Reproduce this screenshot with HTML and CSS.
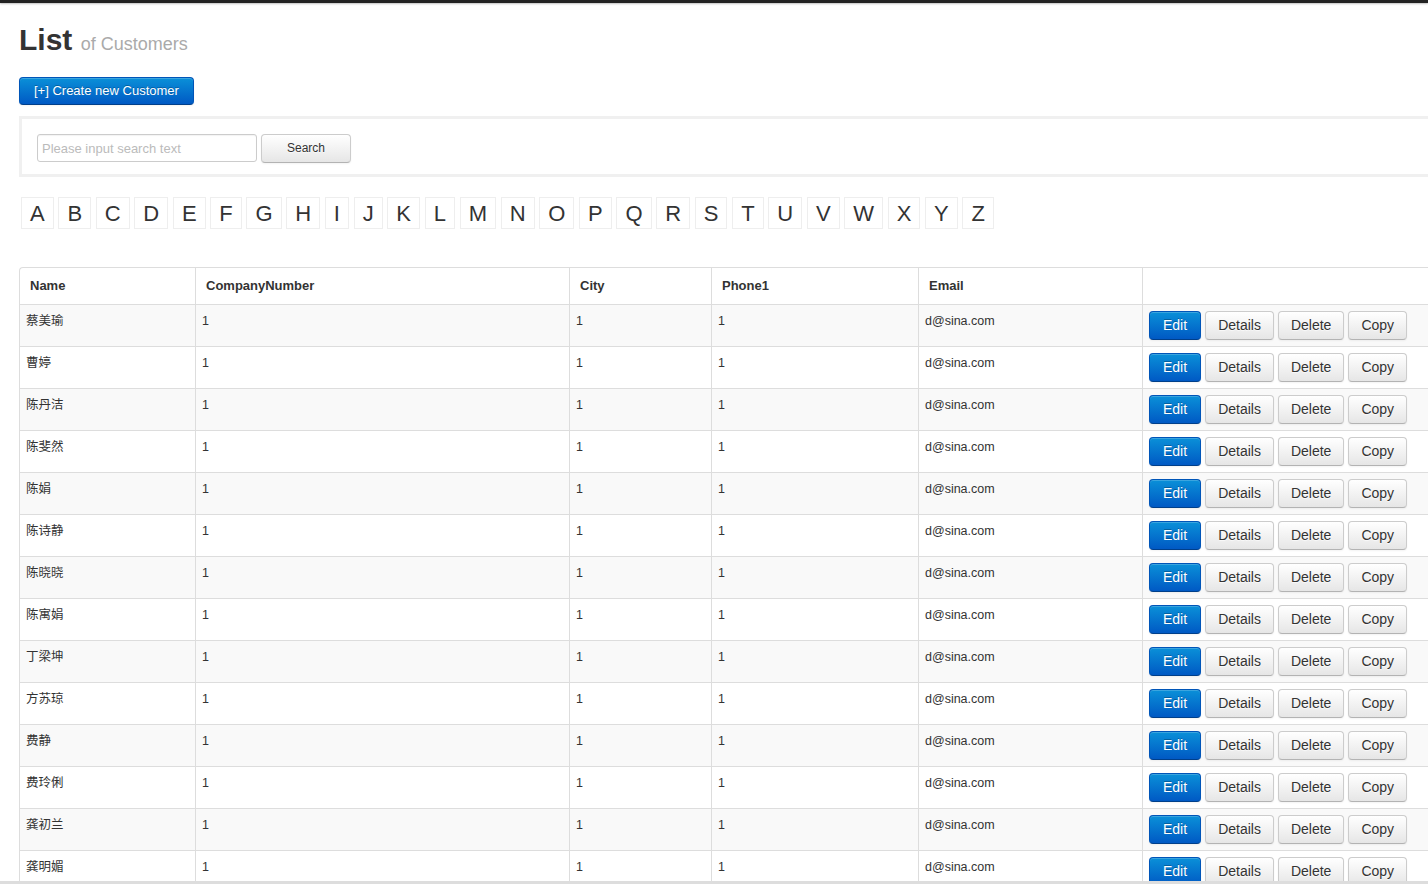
FILE: index.html
```html
<!DOCTYPE html>
<html lang="zh">
<head>
<meta charset="utf-8">
<title>List of Customers</title>
<link rel="stylesheet" href="styles.css">
</head>
<body>
<div class="topbar"></div>
<div class="page">
  <h1 class="title">List <small>of Customers</small></h1>
  <a class="btn btn-primary create">[+] Create new Customer</a>
  <div class="well">
    <form class="search">
      <input class="search-input" type="text" placeholder="Please input search text">
      <button class="btn btn-search" type="button">Search</button>
    </form>
  </div>
  <div class="letters">
    <a class="letter">A</a><a class="letter">B</a><a class="letter">C</a><a class="letter">D</a><a class="letter">E</a><a class="letter">F</a><a class="letter">G</a><a class="letter">H</a><a class="letter">I</a><a class="letter">J</a><a class="letter">K</a><a class="letter">L</a><a class="letter">M</a><a class="letter">N</a><a class="letter">O</a><a class="letter">P</a><a class="letter">Q</a><a class="letter">R</a><a class="letter">S</a><a class="letter">T</a><a class="letter">U</a><a class="letter">V</a><a class="letter">W</a><a class="letter">X</a><a class="letter">Y</a><a class="letter">Z</a>
  </div>
  <table class="grid">
    <colgroup>
      <col class="c-name"><col class="c-company"><col class="c-city"><col class="c-phone"><col class="c-email"><col class="c-actions">
    </colgroup>
    <thead>
      <tr><th>Name</th><th>CompanyNumber</th><th>City</th><th>Phone1</th><th>Email</th><th></th></tr>
    </thead>
    <tbody>
      <tr><td>蔡美瑜</td><td>1</td><td>1</td><td>1</td><td>d@sina.com</td><td class="actions"><a class="btn btn-primary">Edit</a><a class="btn">Details</a><a class="btn">Delete</a><a class="btn">Copy</a></td></tr>
      <tr><td>曹婷</td><td>1</td><td>1</td><td>1</td><td>d@sina.com</td><td class="actions"><a class="btn btn-primary">Edit</a><a class="btn">Details</a><a class="btn">Delete</a><a class="btn">Copy</a></td></tr>
      <tr><td>陈丹洁</td><td>1</td><td>1</td><td>1</td><td>d@sina.com</td><td class="actions"><a class="btn btn-primary">Edit</a><a class="btn">Details</a><a class="btn">Delete</a><a class="btn">Copy</a></td></tr>
      <tr><td>陈斐然</td><td>1</td><td>1</td><td>1</td><td>d@sina.com</td><td class="actions"><a class="btn btn-primary">Edit</a><a class="btn">Details</a><a class="btn">Delete</a><a class="btn">Copy</a></td></tr>
      <tr><td>陈娟</td><td>1</td><td>1</td><td>1</td><td>d@sina.com</td><td class="actions"><a class="btn btn-primary">Edit</a><a class="btn">Details</a><a class="btn">Delete</a><a class="btn">Copy</a></td></tr>
      <tr><td>陈诗静</td><td>1</td><td>1</td><td>1</td><td>d@sina.com</td><td class="actions"><a class="btn btn-primary">Edit</a><a class="btn">Details</a><a class="btn">Delete</a><a class="btn">Copy</a></td></tr>
      <tr><td>陈晓晓</td><td>1</td><td>1</td><td>1</td><td>d@sina.com</td><td class="actions"><a class="btn btn-primary">Edit</a><a class="btn">Details</a><a class="btn">Delete</a><a class="btn">Copy</a></td></tr>
      <tr><td>陈寓娟</td><td>1</td><td>1</td><td>1</td><td>d@sina.com</td><td class="actions"><a class="btn btn-primary">Edit</a><a class="btn">Details</a><a class="btn">Delete</a><a class="btn">Copy</a></td></tr>
      <tr><td>丁梁坤</td><td>1</td><td>1</td><td>1</td><td>d@sina.com</td><td class="actions"><a class="btn btn-primary">Edit</a><a class="btn">Details</a><a class="btn">Delete</a><a class="btn">Copy</a></td></tr>
      <tr><td>方苏琼</td><td>1</td><td>1</td><td>1</td><td>d@sina.com</td><td class="actions"><a class="btn btn-primary">Edit</a><a class="btn">Details</a><a class="btn">Delete</a><a class="btn">Copy</a></td></tr>
      <tr><td>费静</td><td>1</td><td>1</td><td>1</td><td>d@sina.com</td><td class="actions"><a class="btn btn-primary">Edit</a><a class="btn">Details</a><a class="btn">Delete</a><a class="btn">Copy</a></td></tr>
      <tr><td>费玲俐</td><td>1</td><td>1</td><td>1</td><td>d@sina.com</td><td class="actions"><a class="btn btn-primary">Edit</a><a class="btn">Details</a><a class="btn">Delete</a><a class="btn">Copy</a></td></tr>
      <tr><td>龚初兰</td><td>1</td><td>1</td><td>1</td><td>d@sina.com</td><td class="actions"><a class="btn btn-primary">Edit</a><a class="btn">Details</a><a class="btn">Delete</a><a class="btn">Copy</a></td></tr>
      <tr><td>龚明媚</td><td>1</td><td>1</td><td>1</td><td>d@sina.com</td><td class="actions"><a class="btn btn-primary">Edit</a><a class="btn">Details</a><a class="btn">Delete</a><a class="btn">Copy</a></td></tr>
    </tbody>
  </table>
</div>
<div class="bottombar"></div>
</body>
</html>
```

FILE: styles.css
```css
html, body {
  margin: 0;
  padding: 0;
  overflow: hidden;
  background: #fff;
}
body {
  font-family: "Liberation Sans", Arial, "Noto Sans CJK SC", sans-serif;
  color: #333;
  font-size: 13px;
  line-height: 18px;
}
.topbar {
  height: 3px;
  background: #222;
  box-shadow: 0 1px 2px rgba(0,0,0,0.25);
}
.page {
  width: 1480px;
  padding: 0 0 0 19px;
}
.title {
  margin: 17px 0 0 0;
  font-size: 30px;
  line-height: 40px;
  font-weight: bold;
  color: #333;
}
.title small {
  font-size: 18px;
  font-weight: normal;
  color: #aaa;
}
.btn {
  display: inline-block;
  box-sizing: border-box;
  height: 29px;
  padding: 4px 12px;
  font-size: 14px;
  line-height: 19px;
  color: #333;
  text-align: center;
  text-shadow: 0 1px 1px rgba(255,255,255,0.75);
  background: linear-gradient(to bottom, #ffffff, #e6e6e6);
  border: 1px solid #cccccc;
  border-bottom-color: #b3b3b3;
  border-radius: 4px;
  box-shadow: inset 0 1px 0 rgba(255,255,255,0.2), 0 1px 2px rgba(0,0,0,0.05);
  font-family: "Liberation Sans", Arial, sans-serif;
  cursor: pointer;
}
.btn-primary {
  color: #fff;
  text-shadow: 0 -1px 0 rgba(0,0,0,0.25);
  background: linear-gradient(to bottom, #0a90d8, #0059c4);
  border-color: #0055b8 #0055b8 #003f8a;
}
.create {
  margin-top: 13px;
  height: 28px;
  padding: 4px 14px;
  font-size: 13px;
  line-height: 18px;
}
.well {
  margin-top: 11px;
  border: 3px solid #f0f0f0;
  padding: 15px 15px 11px 15px;
}
.search {
  display: flex;
  align-items: flex-start;
  gap: 4px;
  margin: 0;
}
.search-input {
  box-sizing: border-box;
  width: 220px;
  height: 28px;
  margin: 0;
  padding: 4px 4px;
  border: 1px solid #cccccc;
  border-radius: 3px;
  font-family: "Liberation Sans", Arial, sans-serif;
  font-size: 13px;
  color: #555;
  box-shadow: inset 0 1px 1px rgba(0,0,0,0.05);
}
.search-input::placeholder {
  color: #bbb;
}
.btn-search {
  width: 90px;
  height: 29px;
  font-size: 12px;
  margin: 0;
}
.letters {
  display: flex;
  gap: 4.7px;
  margin: 20px 0 0 2px;
}
.letter {
  display: block;
  height: 30px;
  padding: 0 8px;
  border: 1px solid #eeeeee;
  font-size: 22px;
  line-height: 31px;
  color: #333;
}
.grid {
  margin-top: 38px;
  width: 1460px;
  table-layout: fixed;
  border-collapse: separate;
  border-spacing: 0;
  border: 1px solid #dddddd;
  border-right: 0;
  border-radius: 4px 0 0 0;
}
.c-name { width: 175px; }
.c-company { width: 374px; }
.c-city { width: 142px; }
.c-phone { width: 207px; }
.c-email { width: 224px; }
.grid th {
  text-align: left;
  font-size: 13px;
  font-weight: bold;
  line-height: 16px;
  padding: 10px 10px;
  color: #333;
}
.grid th + th, .grid td + td {
  border-left: 1px solid #dddddd;
}
.grid td {
  border-top: 1px solid #dddddd;
  height: 27px;
  padding: 8px 6px 6px 6px;
  vertical-align: top;
  font-size: 12.5px;
  line-height: 17px;
  color: #333;
}
.grid tbody tr:nth-child(odd) td {
  background: #f9f9f9;
}
.grid td.actions {
  padding: 6px 6px 5px 6px;
}
.actions .btn {
  margin-right: 4px;
}
.actions .btn-primary {
  padding: 4px 13px;
}
.bottombar {
  position: fixed;
  left: 0;
  right: 0;
  bottom: 0;
  height: 3px;
  background: #dddddd;
}
```
